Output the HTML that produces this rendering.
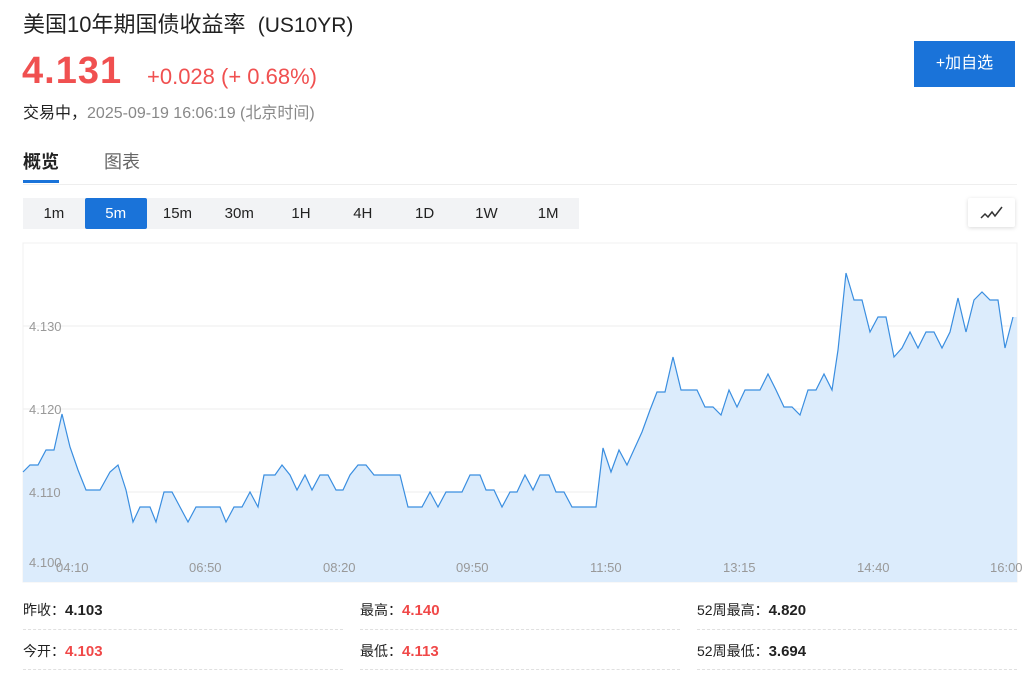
<!DOCTYPE html>
<html><head><meta charset="utf-8"><style>
*{margin:0;padding:0;box-sizing:border-box}
body{width:1024px;height:677px;overflow:hidden;background:#fff;font-family:"Liberation Sans","Noto Sans CJK SC",sans-serif;color:#222;position:relative}
.a{position:absolute;white-space:nowrap}
.tabs{position:absolute;left:23px;top:198px;width:556px;height:31px;background:#f2f3f5;display:flex}
.tabs div{width:62px;text-align:center;line-height:31px;font-size:15px;color:#222}
.tabs .on{background:#1a73d9;color:#fff;border-radius:2px}
.st{font-size:14px;color:#222}
.st b{font-size:15px}
.red{color:#f04848}
.dl{position:absolute;height:0;border-top:1px dashed #e0e0e0;width:320px}
</style></head><body>
<div class="a" style="left:23px;top:7px;font-size:22px;color:#222">美国10年期国债收益率 &nbsp;<span style="font-size:21px">(US10YR)</span></div>
<div class="a" style="left:22px;top:50px;font-size:38px;font-weight:bold;color:#f05050;letter-spacing:1px">4.131</div>
<div class="a" style="left:147px;top:64px;font-size:22px;color:#f05050">+0.028 (+ 0.68%)</div>
<div class="a" style="left:23px;top:99px;font-size:16px;color:#222">交易中，<span style="color:#888">2025-09-19 16:06:19 (北京时间)</span></div>
<div class="a" style="left:914px;top:41px;width:101px;height:46px;background:#1a73d9;color:#fff;font-size:16px;text-align:center;line-height:46px">+加自选</div>
<div class="a" style="left:23px;top:148px;font-size:18px;font-weight:bold">概览</div>
<div class="a" style="left:23px;top:180px;width:36px;height:3px;background:#1a73d9"></div>
<div class="a" style="left:104px;top:148px;font-size:18px;color:#666">图表</div>
<div class="a" style="left:23px;top:184px;width:994px;height:1px;background:#eee"></div>
<div class="tabs"><div>1m</div><div class="on">5m</div><div>15m</div><div>30m</div><div>1H</div><div>4H</div><div>1D</div><div>1W</div><div>1M</div></div>
<div class="a" style="left:968px;top:198px;width:47px;height:29px;background:#fff;box-shadow:0 1px 4px rgba(0,0,0,.15);border-radius:2px">
<svg width="47" height="29"><polyline points="13,20 17,16 20,19 24,14 27,18 34,9" fill="none" stroke="#333" stroke-width="1.5"/></svg></div>
<svg class="a" style="left:0;top:0" width="1024" height="600">
<rect x="23" y="243" width="994" height="339" fill="#fff" stroke="#f0f0f0"/>
<g stroke="#eeeeee"><line x1="23" y1="326" x2="1017" y2="326"/><line x1="23" y1="409" x2="1017" y2="409"/><line x1="23" y1="492" x2="1017" y2="492"/></g>
<polygon fill="#dcecfc" points="23,582 23,472 30,465 38,465 46,450 54,450 62,414 70,447 78,470 86,490 100,490 110,472 118,465 126,490 133,522 140,507 150,507 156,522 164,492 172,492 180,507 188,522 196,507 220,507 226,522 234,507 242,507 250,492 258,507 264,475 275,475 282,465 290,475 297,490 305,475 312,490 320,475 328,475 336,490 343,490 350,475 358,465 366,465 374,475 400,475 408,507 422,507 430,492 438,507 446,492 462,492 470,475 480,475 486,490 494,490 502,507 510,492 517,492 525,475 533,490 540,475 549,475 556,492 564,492 572,507 596,507 603,448 611,472 619,450 627,465 642,432 650,410 657,392 665,392 673,357 681,390 697,390 705,407 713,407 721,415 729,390 737,407 745,390 760,390 768,374 776,390 784,407 792,407 800,415 808,390 816,390 824,374 832,390 838,350 846,273 854,300 862,300 870,332 878,317 886,317 894,357 902,348 910,332 918,348 926,332 934,332 942,348 950,332 958,298 966,332 974,300 982,292 990,300 998,300 1005,348 1013,317 1017,317 1017,582"/>
<polyline fill="none" stroke="#3a8ee0" stroke-width="1.2" points="23,472 30,465 38,465 46,450 54,450 62,414 70,447 78,470 86,490 100,490 110,472 118,465 126,490 133,522 140,507 150,507 156,522 164,492 172,492 180,507 188,522 196,507 220,507 226,522 234,507 242,507 250,492 258,507 264,475 275,475 282,465 290,475 297,490 305,475 312,490 320,475 328,475 336,490 343,490 350,475 358,465 366,465 374,475 400,475 408,507 422,507 430,492 438,507 446,492 462,492 470,475 480,475 486,490 494,490 502,507 510,492 517,492 525,475 533,490 540,475 549,475 556,492 564,492 572,507 596,507 603,448 611,472 619,450 627,465 642,432 650,410 657,392 665,392 673,357 681,390 697,390 705,407 713,407 721,415 729,390 737,407 745,390 760,390 768,374 776,390 784,407 792,407 800,415 808,390 816,390 824,374 832,390 838,350 846,273 854,300 862,300 870,332 878,317 886,317 894,357 902,348 910,332 918,348 926,332 934,332 942,348 950,332 958,298 966,332 974,300 982,292 990,300 998,300 1005,348 1013,317"/>
<g font-family="Liberation Sans" font-size="13" fill="#999">
<text x="29" y="331">4.130</text><text x="29" y="414">4.120</text><text x="29" y="497">4.110</text><text x="29" y="567">4.100</text>
<text x="56" y="572">04:10</text><text x="189" y="572">06:50</text><text x="323" y="572">08:20</text><text x="456" y="572">09:50</text><text x="590" y="572">11:50</text><text x="723" y="572">13:15</text><text x="857" y="572">14:40</text><text x="990" y="572">16:00</text>
</g></svg>
<div class="a st" style="left:23px;top:600px">昨收：<b>4.103</b></div>
<div class="a st" style="left:360px;top:600px">最高：<b class="red">4.140</b></div>
<div class="a st" style="left:697px;top:600px">52周最高：<b>4.820</b></div>
<div class="a st" style="left:23px;top:641px">今开：<b class="red">4.103</b></div>
<div class="a st" style="left:360px;top:641px">最低：<b class="red">4.113</b></div>
<div class="a st" style="left:697px;top:641px">52周最低：<b>3.694</b></div>
<div class="dl" style="left:23px;top:629px"></div><div class="dl" style="left:360px;top:629px"></div><div class="dl" style="left:697px;top:629px"></div>
<div class="dl" style="left:23px;top:669px"></div><div class="dl" style="left:360px;top:669px"></div><div class="dl" style="left:697px;top:669px"></div>
</body></html>
